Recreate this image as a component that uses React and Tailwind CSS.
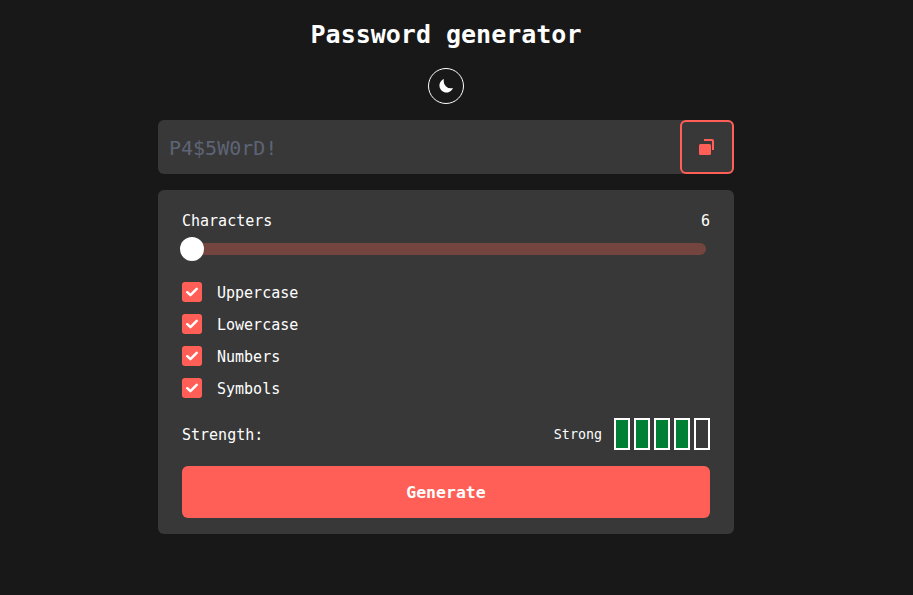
const mono = "font-['DejaVu_Sans_Mono','Liberation_Mono',monospace]";

const options = ['Uppercase', 'Lowercase', 'Numbers', 'Symbols'];
const bars = [true, true, true, true, false];

function MoonIcon() {
  return (
    <svg width="16" height="16" viewBox="0 0 16 16" fill="#fff">
      <path d="M6 1A7 7 0 1 0 15 10 7.3 7.3 0 0 1 6 1z" />
    </svg>
  );
}

function CopyIcon() {
  return (
    <svg width="16" height="16" viewBox="0 0 16 16" fill="none">
      <rect x="0" y="5" width="12" height="11" rx="1.5" fill="#ff5f56" />
      <path d="M5 1h8c.6 0 1 .4 1 1v9" stroke="#ff5f56" strokeWidth="2" />
    </svg>
  );
}

function CheckIcon() {
  return (
    <svg width="12" height="10" viewBox="0 0 12 10" fill="none">
      <path d="M1.3 5.2 4.4 8.2 10.7 1.8" stroke="#fff" strokeWidth="2.4" strokeLinecap="round" strokeLinejoin="round" />
    </svg>
  );
}

export default function App() {
  return (
    <div className={`min-h-[595px] bg-[#181818] text-white flex flex-col items-center pr-[21px] ${mono}`}>
      <h1 className="mt-[17px] h-[36px] text-[25px] leading-[36px] font-bold">Password generator</h1>

      <button className="mt-[15px] w-9 h-9 rounded-full border border-white flex items-center justify-center">
        <MoonIcon />
      </button>

      {/* Champ mot de passe */}
      <div className="mt-4 w-[576px] h-[54px] bg-[#383838] rounded-md flex">
        <input
          readOnly
          placeholder="P4$5W0rD!"
          className="flex-1 min-w-0 bg-transparent pl-[11px] pt-[2px] text-[20px] outline-none placeholder:text-[#5d6475]"
        />
        <button className="w-[54px] h-[54px] border-2 border-[#ff5f56] rounded-md flex items-center justify-center">
          <CopyIcon />
        </button>
      </div>

      {/* Options */}
      <div className="mt-4 w-[576px] h-[344px] bg-[#383838] rounded-md px-6 pt-[19px] pb-4 flex flex-col">
        <div className="flex justify-between text-[15px] leading-6 h-6">
          <span>Characters</span>
          <span>6</span>
        </div>

        <div className="relative mt-[10px] h-3 w-[524px] rounded-full bg-[#74443f]">
          <span className="absolute -left-[2px] -top-[6px] w-6 h-6 rounded-full bg-white" />
        </div>

        <div className="mt-[27px] flex flex-col gap-3">
          {options.map((o) => (
            <label key={o} className="flex items-center h-5 text-[15px] leading-[22px]">
              <span className="w-5 h-5 rounded-[3px] bg-[#ff5f56] flex items-center justify-center">
                <CheckIcon />
              </span>
              <span className="ml-[15px] pt-[2px]">{o}</span>
            </label>
          ))}
        </div>

        <div className="mt-[20px] h-8 flex items-center justify-between">
          <span className="text-[15px] pt-[2px]">Strength:</span>
          <div className="flex items-center">
            <span className="text-[13.33px] mr-3 pt-[2px]">Strong</span>
            <div className="flex gap-1">
              {bars.map((on, i) => (
                <span key={i} className={`w-4 h-8 border-2 border-white ${on ? 'bg-[#008035]' : ''}`} />
              ))}
            </div>
          </div>
        </div>

        <button className="mt-4 h-[52px] w-full rounded-md bg-[#ff5f56] text-white text-[16.5px] font-bold pt-[2px]">
          Generate
        </button>
      </div>
    </div>
  );
}
